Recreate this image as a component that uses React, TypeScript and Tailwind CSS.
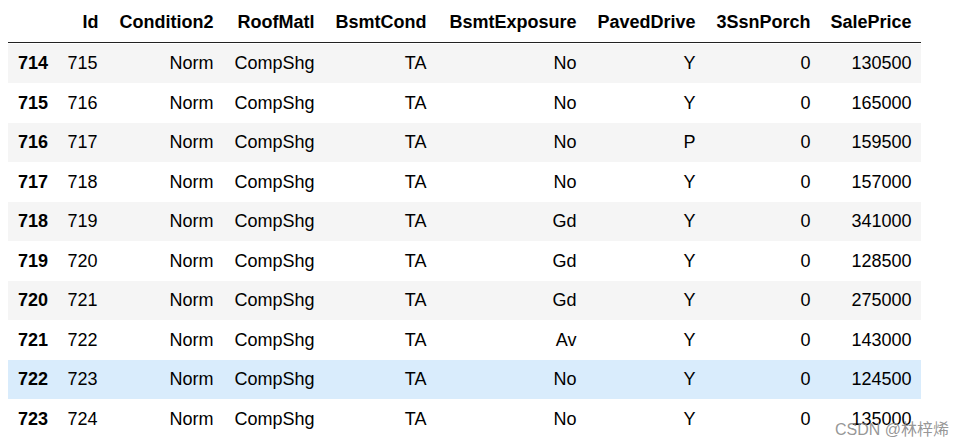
const COLUMNS = ["Id", "Condition2", "RoofMatl", "BsmtCond", "BsmtExposure", "PavedDrive", "3SsnPorch", "SalePrice"];

const ROWS: [number, number, string, string, string, string, string, number, number][] = [
  [714, 715, "Norm", "CompShg", "TA", "No", "Y", 0, 130500],
  [715, 716, "Norm", "CompShg", "TA", "No", "Y", 0, 165000],
  [716, 717, "Norm", "CompShg", "TA", "No", "P", 0, 159500],
  [717, 718, "Norm", "CompShg", "TA", "No", "Y", 0, 157000],
  [718, 719, "Norm", "CompShg", "TA", "Gd", "Y", 0, 341000],
  [719, 720, "Norm", "CompShg", "TA", "Gd", "Y", 0, 128500],
  [720, 721, "Norm", "CompShg", "TA", "Gd", "Y", 0, 275000],
  [721, 722, "Norm", "CompShg", "TA", "Av", "Y", 0, 143000],
  [722, 723, "Norm", "CompShg", "TA", "No", "Y", 0, 124500],
  [723, 724, "Norm", "CompShg", "TA", "No", "Y", 0, 135000],
];

const GRID = "grid grid-cols-[50px_50px_115px_101px_112px_150px_119px_115px_101px]";

export default function App() {
  return (
    <div className="relative h-[447px] w-[977px] overflow-hidden bg-white font-['Liberation_Sans',Arial,sans-serif] text-[18px] text-black">
      <div className="ml-[8px] w-[913px]">
        <div className={`${GRID} h-[42.5px] content-start border-b-[1.5px] border-[#222] pt-[12px] font-bold leading-[21px]`}>
          <div />
          {COLUMNS.map((c) => (
            <div key={c} className="px-[9.5px] text-right">
              {c}
            </div>
          ))}
        </div>
        <div className="pt-[1px]">
          {ROWS.map((r, i) => {
            const bg = r[0] === 722 ? "bg-[#d9ecfc]" : i % 2 === 0 ? "bg-[#f5f5f5]" : "bg-white";
            return (
              <div key={r[0]} className={`${GRID} h-[39.5px] items-center pt-[1px] ${bg}`}>
                <div className="pl-[10px] font-bold">{r[0]}</div>
                <div className="px-[9.5px] text-left">{r[1]}</div>
                {r.slice(2).map((v, j) => (
                  <div key={j} className="px-[9.5px] text-right">
                    {v}
                  </div>
                ))}
              </div>
            );
          })}
        </div>
      </div>
      <div className="absolute left-[835px] top-[418px] font-['Liberation_Sans','Noto_Sans_CJK_SC',sans-serif] text-[16px] text-[#8a8a8a]/90">
        CSDN @林梓烯
      </div>
    </div>
  );
}
